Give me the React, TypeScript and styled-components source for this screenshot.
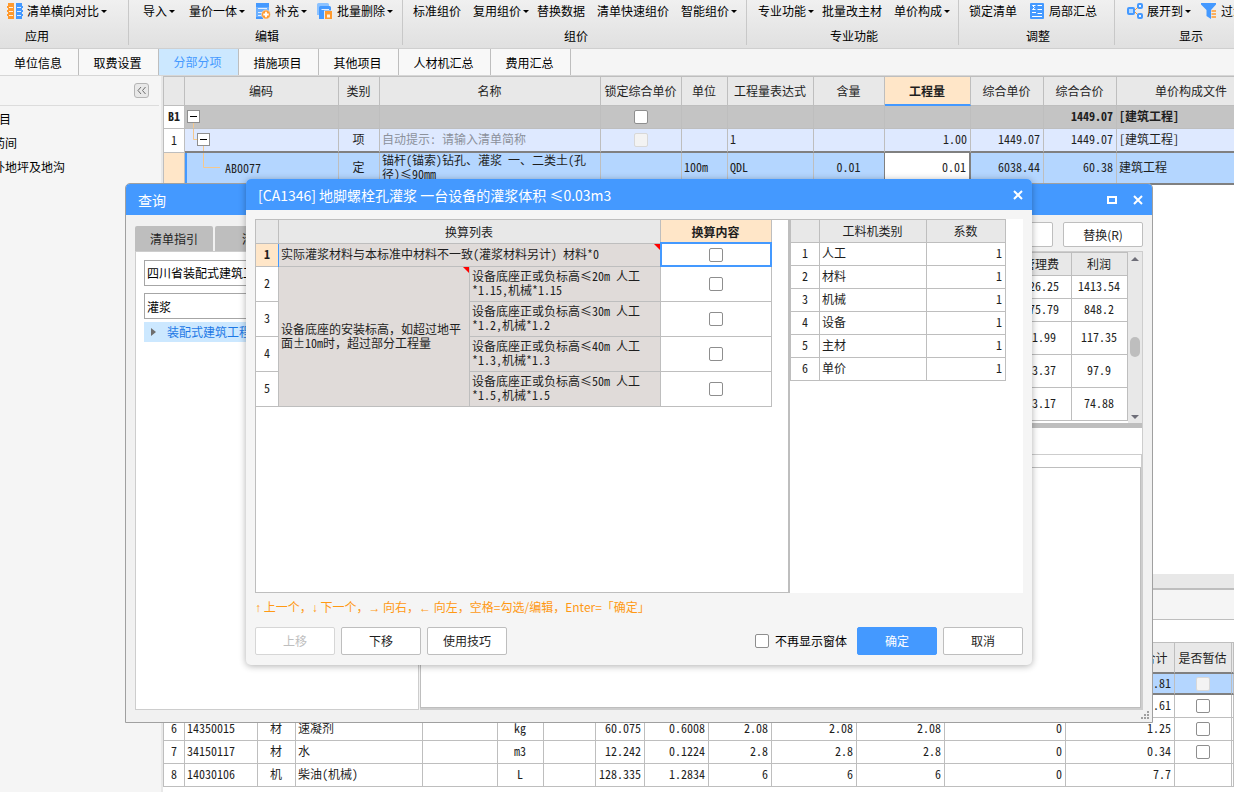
import React from 'react';
import styled, { createGlobalStyle, css } from 'styled-components';

const BLUE = '#4499ff';
const ORANGE = '#ff9a2e';
const LINE = '#bebebe';
const HEAD = '#e8e8e8';
const PEACH = '#ffe6c8';
const SELECTED = '#b4d6ff';
const DARK = '#808080';

const Global = createGlobalStyle`
  *, *::before, *::after { box-sizing: border-box; }
  body {
    margin: 0;
    overflow: hidden;
    color: #000;
    background: #f5f5f5;
    font: 12px/16px "Noto Sans CJK SC", sans-serif;
  }
  button, input, select { font: inherit; color: inherit; }
`;

const Page = styled.div`
  position: relative;
  display: flex;
  flex-direction: column;
  height: 100vh;
  overflow: hidden;
`;

/* ---------- ribbon ---------- */

const Ribbon = styled.header`
  display: flex;
  flex: none;
  height: 49px;
  overflow: hidden;
  background: linear-gradient(#f0f0f0, #e0e0e0);
  border-bottom: 1px solid #cfcfcf;
`;

const RibbonGroup = styled.section<{ $width: number }>`
  flex: none;
  width: ${(p) => p.$width}px;
  height: 45px;
  border-right: 1px solid #c8c8c8;
`;

const RibbonTools = styled.div<{ $inset: number; $gap?: number }>`
  display: flex;
  align-items: center;
  height: 22px;
  gap: ${(p) => p.$gap ?? 0}px;
  padding-left: ${(p) => p.$inset}px;
`;

const ToolButton = styled.button<{ $icon?: boolean; $drop?: boolean }>`
  display: flex;
  flex: none;
  align-items: center;
  height: 22px;
  padding: 0 ${(p) => (p.$drop ? 2 : 6)}px 0 ${(p) => (p.$icon ? 2 : 6)}px;
  border: 0;
  background: none;
  white-space: nowrap;

  svg { flex: none; margin-right: 4px; }
`;

const Caret = styled.span`
  width: 6px;
  margin-left: 2px;
  border: 3px solid transparent;
  border-top-color: #000;
  border-bottom: 0;
`;

const GroupName = styled.div<{ $start?: number }>`
  height: 22px;
  margin-top: 4px;
  line-height: 20px;
  text-align: ${(p) => (p.$start ? 'left' : 'center')};
  padding-left: ${(p) => p.$start ?? 3}px;
`;

/* ---------- tabs ---------- */

const TabBar = styled.nav`
  display: flex;
  flex: none;
  height: 27px;
  background: #f5f5f5;
  border-bottom: 1px solid #d6d6d6;
`;

const Tab = styled.button<{ $width: number; $active?: boolean }>`
  width: ${(p) => p.$width}px;
  padding: ${(p) => (p.$active ? 0 : 2)}px 2px 0 0;
  border: 0;
  border-right: 1px solid ${LINE};
  line-height: 24px;
  background: ${(p) => (p.$active ? '#cce8ff' : '#f8f8f8')};
  color: ${(p) => (p.$active ? BLUE : '#000')};
`;

/* ---------- workspace ---------- */

const Workspace = styled.div`
  display: flex;
  flex: 1;
  min-height: 0;
`;

const Sidebar = styled.aside`
  flex: none;
  width: 163px;
  overflow: hidden;
  border-right: 2px solid #e8e8e8;
`;

const SidebarHead = styled.div`
  display: flex;
  justify-content: flex-end;
  align-items: center;
  height: 30px;
  margin-right: 2px;
  padding-right: 10px;
  border-bottom: 1px solid #dcdcdc;
`;

const CollapseButton = styled.button`
  display: grid;
  place-items: center;
  width: 15px;
  height: 15px;
  padding: 0;
  border: 1px solid #b4b4b4;
  border-radius: 3px;
  background: #e8e8e8;
`;

const TreeList = styled.ul`
  margin: 0 0 0 -7px;
  padding: 1px 0 0;
  list-style: none;
  white-space: nowrap;
  line-height: 24px;
`;

const TreeRoot = styled.li`
  padding-left: 6px;
`;

const Main = styled.main`
  display: flex;
  flex: 1;
  flex-direction: column;
  min-width: 0;
  overflow: hidden;
  background: #fff;
`;

/* ---------- data grids ---------- */

const Grid = styled.table<{ $width?: string; $frame?: boolean }>`
  table-layout: fixed;
  border-collapse: separate;
  border-spacing: 0;
  width: ${(p) => p.$width ?? '100%'};
  color: #1e1e1e;
  font: 12px/14px "Noto Sans Mono CJK SC", "Noto Sans CJK SC", monospace;
  ${(p) => p.$frame && css`
    border-top: 1px solid ${LINE};
    border-left: 1px solid ${LINE};
  `}
`;

const HeadCell = styled.th<{ $active?: boolean }>`
  padding: 0 1px 0 0;
  overflow: hidden;
  white-space: nowrap;
  font-weight: ${(p) => (p.$active ? 700 : 400)};
  background: ${(p) => (p.$active ? PEACH : HEAD)};
  border-right: 1px solid ${LINE};
  border-bottom: 1px solid ${LINE};
`;

const FocusHead = styled(HeadCell)`
  border-bottom: 2px solid ${BLUE};
`;

const Row = styled.tr<{ $h: number; $tone?: 'section' | 'item' | 'selected' }>`
  height: ${(p) => p.$h}px;
  ${(p) => p.$tone === 'section' && css`background: #c4c4c4; font-weight: 700;`}
  ${(p) => p.$tone === 'item' && css`background: #dee9ff;`}
  ${(p) => p.$tone === 'selected' && css`background: ${SELECTED};`}
`;

const Cell = styled.td<{ $align?: 'left' | 'center' | 'right'; $edge?: boolean; $muted?: boolean }>`
  padding: 0 3px 2px 2px;
  white-space: nowrap;
  text-align: ${(p) => p.$align ?? 'left'};
  color: ${(p) => (p.$muted ? '#8c919b' : 'inherit')};
  border-right: 1px solid ${LINE};
  border-bottom: ${(p) => (p.$edge ? `2px solid ${DARK}` : `1px solid ${LINE}`)};
`;

const RowNumber = styled(Cell)<{ $current?: boolean }>`
  padding: 0 0 2px;
  text-align: center;
  background: ${(p) => (p.$current ? PEACH : '#fff')};
`;

const TickCell = styled(Cell)`
  padding: 0;
`;

const EditCell = styled(Cell)`
  background: #fff;
  box-shadow: -1px 0 0 ${DARK};
  border-right: 2px solid ${DARK};
`;

const TreeCell = styled(Cell)`
  padding: 0;

  svg { display: block; flex: none; }
`;

const TreeLabel = styled.div`
  display: flex;
  align-items: center;
  border-left: 2px solid ${BLUE};
`;

const Tick = styled.input.attrs({ type: 'checkbox' })`
  appearance: none;
  display: block;
  width: 14px;
  height: 14px;
  margin: 0 auto;
  border: 1px solid #8e8e8e;
  border-radius: 2px;
  background: #fff;

  &:disabled { border-color: #d8d8d8; background: #f3f3f3; }
`;

const UpperGrid = styled.div`
  flex: 1;
  min-height: 0;
  overflow: hidden;
`;

const Splitter = styled.div`
  flex: none;
  height: 16px;
  background: #e8e8e8;
  border-bottom: 2px solid ${LINE};
`;

const DetailBar = styled.div`
  flex: none;
  height: 30px;
  background: #f5f5f5;
  border-bottom: 1px solid ${LINE};
`;

const LowerGrid = styled.div`
  flex: none;
  padding: 22px 0 5px;
  overflow: hidden;
`;

const DarkHeadRow = styled.tr`
  height: 31px;

  th { border-bottom: 2px solid ${DARK}; }
`;

/* ---------- windows ---------- */

const QueryWindow = styled.section`
  position: absolute;
  inset: 183px 81px 69px 125px;
  display: flex;
  flex-direction: column;
  border: 1px solid #a0a0a0;
  border-radius: 5px 5px 0 0;
  overflow: hidden;
  background: #f1f1f1;
`;

const TitleBar = styled.div`
  display: flex;
  flex: none;
  align-items: center;
  justify-content: space-between;
  height: 31px;
  padding: 0 9px 0 12px;
  color: #fff;
  background: ${BLUE};
  font-size: 14px;
`;

const WindowTitle = styled.h2`
  margin: 0;
  font: inherit;
  white-space: pre;
`;

const Controls = styled.div`
  display: flex;
  gap: 16px;
`;

const ControlButton = styled.button`
  display: grid;
  padding: 0;
  border: 0;
  background: none;
`;

const QueryHead = styled.div`
  display: flex;
  flex: none;
  justify-content: space-between;
  height: 36px;
  padding: 0 9px;
`;

const PaneTabs = styled.div`
  display: flex;
  align-items: flex-end;
  gap: 2px;
`;

const PaneTab = styled.button`
  width: 78px;
  height: 25px;
  padding: 0;
  border: 0;
  border-radius: 2px 2px 0 0;
  background: ${LINE};
  color: #1e1e1e;
`;

const Button = styled.button<{ $primary?: boolean }>`
  width: 80px;
  height: 28px;
  padding: 0;
  border: 1px solid ${(p) => (p.$primary ? BLUE : LINE)};
  border-radius: 2px;
  background: ${(p) => (p.$primary ? BLUE : '#fff')};
  color: ${(p) => (p.$primary ? '#fff' : '#1e1e1e')};

  &:disabled { color: #bebebe; border-color: #d6d6d6; }
`;

const QueryActions = styled.div`
  display: flex;
  gap: 10px;
  padding-top: 7px;

  ${Button} { height: 25px; }
`;

const QueryBody = styled.div`
  display: flex;
  flex: 1;
  min-height: 0;
  padding: 0 9px 12px;
`;

const SearchPane = styled.div`
  display: flex;
  flex: none;
  flex-direction: column;
  width: 284px;
  padding: 8px;
  border: 1px solid #cdcdcd;
  background: #fff;
`;

const field = css`
  flex: none;
  height: 26px;
  margin: 0 0 7px;
  padding: 0 2px;
  border: 1px solid #a6a6a6;
  border-radius: 0;
  background: #fff;
`;

const BookSelect = styled.select`
  ${field}
  appearance: none;
`;

const KeywordInput = styled.input`
  ${field}
  margin-bottom: 3px;
`;

const ResultNode = styled.button`
  display: flex;
  flex: none;
  align-items: center;
  gap: 11px;
  height: 20px;
  padding: 0 7px;
  border: 0;
  background: #cce8ff;
  color: #1e78e6;
  white-space: nowrap;
`;

const ResultPane = styled.div`
  display: flex;
  flex: 1;
  flex-direction: column;
  min-width: 0;
  margin-left: 1px;
  border: solid #cdcdcd;
  border-width: 1px 1px 2px 0;
  background: #fff;
`;

const ResultTable = styled.div`
  display: flex;
  flex: none;
  justify-content: flex-end;
  align-items: flex-start;
  height: 171px;
`;

const ScrollTrack = styled.div`
  display: flex;
  flex: none;
  flex-direction: column;
  align-items: center;
  align-self: stretch;
  width: 14px;
  padding: 5px 0 4px;
  background: #e8e8e8;
`;

const ScrollThumb = styled.div`
  width: 10px;
  height: 20px;
  margin: 76px 0 auto;
  border-radius: 5px;
  background: #bebebe;
`;

const ScrollArrow = styled.span<{ $down?: boolean }>`
  border: 4px solid transparent;
  ${(p) => (p.$down
    ? css`border-top-color: #6e6e78; border-bottom: 0;`
    : css`border-bottom-color: #6e6e78; border-top: 0;`)}
`;

const ResultBar = styled.div`
  flex: none;
  height: 31px;
  border-top: 5px solid ${LINE};
`;

const ResultDetail = styled.div`
  display: flex;
  flex: 1;
  min-height: 0;
  padding-top: 12px;
  border-top: 1px solid #cdcdcd;
  border-right: 1px solid #cdcdcd;
`;

const DetailBox = styled.div`
  flex: 1;
  border: 1px solid ${LINE};
`;

const Grip = styled.svg`
  position: absolute;
  right: 3px;
  bottom: 3px;
`;

const Dialog = styled.section`
  position: absolute;
  inset: 179px 202px 127px 246px;
  display: flex;
  flex-direction: column;
  border-radius: 5px;
  overflow: hidden;
  background: #f5f5f5;
  box-shadow: 0 1px 7px rgba(0, 0, 0, 0.32);
`;

const DialogBody = styled.div`
  display: flex;
  flex: 1;
  flex-direction: column;
  min-height: 0;
  padding: 9px 9px 10px;
`;

const DialogPanels = styled.div`
  display: grid;
  flex: 1;
  grid-template-columns: 535fr 233fr;
  min-height: 0;
`;

const ConversionPanel = styled.div`
  border: 1px solid ${LINE};
  border-right-width: 2px;
  background: #fff;
`;

const FactorPanel = styled.div`
  background: #fff;
`;

const NoteCell = styled(Cell)<{ $flag?: boolean }>`
  position: relative;
  background: #e0dbd9;

  ${(p) => p.$flag && css`
    &::after {
      content: '';
      position: absolute;
      top: 0;
      right: 0;
      border-top: 6px solid #f00;
      border-left: 6px solid transparent;
    }
  `}
`;

const CurrentNote = styled(NoteCell)`
  box-shadow: -1px 0 0 ${BLUE};
`;

const CheckCell = styled(Cell)<{ $focus?: boolean }>`
  position: relative;
  padding: 0;

  ${(p) => p.$focus && css`
    &::after {
      content: '';
      position: absolute;
      inset: -2px -1px -1px -1px;
      border: 2px solid ${BLUE};
      pointer-events: none;
    }
  `}
`;

const Hint = styled.p`
  flex: none;
  margin: 0 0 5px;
  color: #ff9914;
  line-height: 28px;
  white-space: nowrap;
`;

const Key = styled.span`
  font-family: "Liberation Sans", sans-serif;
`;

const Footer = styled.div`
  display: flex;
  flex: none;
  align-items: center;
  gap: 6px;
`;

const DismissLabel = styled.label`
  display: flex;
  align-items: center;
  gap: 6px;
  margin: 0 4px 0 auto;
`;

/* ---------- icons ---------- */

const CompareIcon = () => (
  <svg width="16" height="16" viewBox="0 0 16 16">
    <path fill={ORANGE} d="M1 0h6v16H1V13H0v-2h1V9H0V7h1V5H0V3h1z" />
    <path fill={BLUE} d="M9 0h6v3h1v2h-1v2h1v2h-1v2h1v2h-1v3H9z" />
    <path stroke="#fff0dc" d="M2 4.500h4M2 8.500h4M2 12.500h4" />
    <path stroke="#dcebff" d="M10 4.500h4M10 8.500h4M10 12.500h4" />
  </svg>
);

const SupplementIcon = () => (
  <svg width="16" height="16" viewBox="0 0 16 16">
    <path fill="#6cb0ff" d="M1 1.500A1.500 1.500 0 0 1 2.500 0h10A1.500 1.500 0 0 1 14 1.500V15H1z" />
    <path fill={BLUE} d="M1 0h13v4H1zM1 14h7v2H1z" />
    <path stroke="#e4efff" d="M3 5.500h9M3 9.500h4M3 12.500h3" fill="none" />
    <circle cx="11" cy="11.500" r="4.500" fill={ORANGE} stroke="#ececec" strokeWidth=".6" />
    <path stroke="#fff" strokeWidth="1.800" d="M11 8.800v5.400M8.300 11.500h5.400" />
  </svg>
);

const BatchDeleteIcon = () => (
  <svg width="16" height="16" viewBox="0 0 16 16">
    <path fill="#8cc2ff" d="M1.500 0h9A1.500 1.500 0 0 1 12 1.500V12H0V1.500A1.500 1.500 0 0 1 1.500 0z" />
    <path fill={BLUE} d="M2 4.500A1.500 1.500 0 0 1 3.500 3h9A1.500 1.500 0 0 1 14 4.500V16H2z" />
    <path stroke="#e4efff" d="M4.500 6.500H12" />
    <path fill="#ececec" d="M7 7.500h9V16H7z" />
    <path fill={ORANGE} d="M8 8h7v2H8zM8 10h7v6H8z" />
    <path fill="#fff0dc" d="M10 11.500h3v3h-3z" />
  </svg>
);

const PartialSumIcon = () => (
  <svg width="16" height="16" viewBox="0 0 16 16">
    <rect x="1" y="0" width="14" height="16" rx="1" fill={BLUE} />
    <path fill="none" stroke="#fff" d="M6.500 2.500h-3L5.500 4.500l-2 2h3M8.500 2.500H13M8.500 6.500H13M3 9.500h4M3 13.500h10M8.500 10.500H13" />
  </svg>
);

const ExpandIcon = () => (
  <svg width="16" height="16" viewBox="0 0 16 16">
    <path fill="none" stroke={ORANGE} d="M8 7l3-3M8 9l3 3" />
    <rect x="1" y="5" width="6" height="6" rx="1" fill="#b4d8ff" stroke={BLUE} strokeWidth="2" />
    <rect x="11" y="1" width="4" height="4" rx="1" fill="#e8f2ff" stroke={BLUE} strokeWidth="2" />
    <rect x="11" y="11" width="4" height="4" rx="1" fill="#e8f2ff" stroke={BLUE} strokeWidth="2" />
  </svg>
);

const FilterIcon = () => (
  <svg width="16" height="16" viewBox="0 0 16 16">
    <path fill={BLUE} d="M0 0h15v1.500L10 7v9L5.500 13V7L0 1.500z" />
    <path stroke={ORANGE} strokeWidth="1.500" d="M10.500 8H15M10.500 11H15M10.500 14H15" />
  </svg>
);

const CloseIcon = () => (
  <svg width="10" height="10" viewBox="0 0 10 10">
    <path stroke="#fff" strokeWidth="2" d="M1 1l8 8M9 1L1 9" />
  </svg>
);

const MaximizeIcon = () => (
  <svg width="10" height="10" viewBox="0 0 10 10">
    <path fill="none" stroke="#fff" strokeWidth="2" d="M1 2h8v6H1z" />
  </svg>
);

const Fold = ({ x, y }: { x: number; y: number }) => (
  <g transform={`translate(${x} ${y})`}>
    <rect x="0.500" y="0.500" width="12" height="12" fill="#fff" stroke="#8e8e8e" />
    <path stroke="#000" d="M3 6.500h7" />
  </g>
);

/* ---------- data ---------- */

interface Tool {
  text: string;
  icon?: React.ReactNode;
  drop?: boolean;
}

interface ToolGroup {
  name: string;
  width: number;
  inset: number;
  gap?: number;
  nameStart?: number;
  tools: Tool[];
}

const groups: ToolGroup[] = [
  { name: '应用', width: 129, inset: 5, nameStart: 25, tools: [{ text: '清单横向对比', icon: <CompareIcon />, drop: true }] },
  {
    name: '编辑', width: 274, inset: 8, gap: 6,
    tools: [
      { text: '导入', drop: true },
      { text: '量价一体', drop: true },
      { text: '补充', icon: <SupplementIcon />, drop: true },
      { text: '批量删除', icon: <BatchDeleteIcon />, drop: true },
    ],
  },
  {
    name: '组价', width: 344, inset: 4,
    tools: [
      { text: '标准组价' },
      { text: '复用组价', drop: true },
      { text: '替换数据' },
      { text: '清单快速组价' },
      { text: '智能组价', drop: true },
    ],
  },
  {
    name: '专业功能', width: 212, inset: 5,
    tools: [{ text: '专业功能', drop: true }, { text: '批量改主材' }, { text: '单价构成', drop: true }],
  },
  {
    name: '调整', width: 156, inset: 4, gap: 4,
    tools: [{ text: '锁定清单' }, { text: '局部汇总', icon: <PartialSumIcon /> }],
  },
  {
    name: '显示', width: 150, inset: 10, gap: 6,
    tools: [{ text: '展开到', icon: <ExpandIcon />, drop: true }, { text: '过滤', icon: <FilterIcon />, drop: true }],
  },
];

const tabs: [string, number][] = [
  ['单位信息', 79], ['取费设置', 80], ['分部分项', 80], ['措施项目', 80],
  ['其他项目', 80], ['人材机汇总', 92], ['费用汇总', 80],
];

const upperWidths = [21, 154, 41, 221, 81, 46, 86, 71, 86, 73, 73];
const upperHeads = ['', '编码', '类别', '名称', '锁定综合单价', '单位', '工程量表达式', '含量', '工程量', '综合单价', '综合合价', '单价构成文件'];

const lowerWidths = [21, 73, 38, 127, 75, 46, 52, 49, 64, 63, 85, 88, 121, 109, 57];
const lowerRows = [
  ['6', '14350015', '材', '速凝剂', '', 'kg', '', '60.075', '0.6008', '2.08', '2.08', '2.08', '0', '1.25', 'x'],
  ['7', '34150117', '材', '水', '', 'm3', '', '12.242', '0.1224', '2.8', '2.8', '2.8', '0', '0.34', 'x'],
  ['8', '14030106', '机', '柴油(机械)', '', 'L', '', '128.335', '1.2834', '6', '6', '6', '0', '7.7', ''],
];

const heights = [
  { level: '≤20m', factor: '1.15' },
  { level: '≤30m', factor: '1.2' },
  { level: '≤40m', factor: '1.3' },
  { level: '≤50m', factor: '1.5' },
];

const feeRows: [number, string, string][] = [
  [23, '926.25', '1413.54'],
  [23, '575.79', '848.2'],
  [33, '71.99', '117.35'],
  [33, '63.37', '97.9'],
  [33, '43.17', '74.88'],
];

const factorNames = ['人工', '材料', '机械', '设备', '主材', '单价'];

const Columns = ({ widths, rest }: { widths: number[]; rest?: boolean }) => (
  <colgroup>
    {widths.map((w, i) => <col key={i} style={{ width: w }} />)}
    {rest && <col />}
  </colgroup>
);

/* ---------- parts ---------- */

const BillGrid = () => (
  <UpperGrid>
    <Grid $frame $width="max(100%, 1104px)">
      <Columns widths={upperWidths} rest />
      <thead>
        <Row $h={29}>
          {upperHeads.map((h, i) => (h === '工程量'
            ? <FocusHead key={i} $active>{h}</FocusHead>
            : <HeadCell key={i}>{h}</HeadCell>))}
        </Row>
      </thead>
      <tbody>
        <Row $h={23} $tone="section">
          <RowNumber>B1</RowNumber>
          <TreeCell>
            <svg width="40" height="22">
              <path stroke="#f5c88c" d="M8.500 17v5" />
              <Fold x={2} y={4} />
            </svg>
          </TreeCell>
          <Cell /><Cell />
          <TickCell><Tick aria-label="锁定综合单价 B1" /></TickCell>
          <Cell /><Cell /><Cell /><Cell /><Cell />
          <Cell $align="right">1449.07</Cell>
          <Cell>[建筑工程]</Cell>
        </Row>
        <Row $h={24} $tone="item">
          <RowNumber>1</RowNumber>
          <TreeCell $edge>
            <svg width="40" height="22">
              <path fill="none" stroke="#f5c88c" d="M8.500 0v10.500h4M18.500 17v5" />
              <Fold x={12} y={4} />
            </svg>
          </TreeCell>
          <Cell $edge $align="center">项</Cell>
          <Cell $edge $muted>自动提示: 请输入清单简称</Cell>
          <TickCell $edge><Tick disabled aria-label="锁定综合单价 1" /></TickCell>
          <Cell $edge />
          <Cell $edge>1</Cell>
          <Cell $edge />
          <Cell $edge $align="right">1.00</Cell>
          <Cell $edge $align="right">1449.07</Cell>
          <Cell $edge $align="right">1449.07</Cell>
          <Cell $edge>[建筑工程]</Cell>
        </Row>
        <Row $h={32} $tone="selected">
          <RowNumber $current />
          <TreeCell $edge>
            <TreeLabel>
              <svg width="38" height="30">
                <path fill="none" stroke="#f5c88c" d="M16.500 0v14.500H33" />
              </svg>
              AB0077
            </TreeLabel>
          </TreeCell>
          <Cell $edge $align="center">定</Cell>
          <Cell $edge>锚杆(锚索)钻孔、灌浆 一、二类土(孔<br />径)≤90mm</Cell>
          <Cell $edge />
          <Cell $edge>100m</Cell>
          <Cell $edge>QDL</Cell>
          <Cell $edge $align="center">0.01</Cell>
          <EditCell $edge $align="right">0.01</EditCell>
          <Cell $edge $align="right">6038.44</Cell>
          <Cell $edge $align="right">60.38</Cell>
          <Cell $edge>建筑工程</Cell>
        </Row>
      </tbody>
    </Grid>
  </UpperGrid>
);

const blanks = (n: number, edge?: boolean) =>
  Array.from({ length: n }, (_, i) => <Cell key={i} $edge={edge} />);

const lowerAlign = (i: number) => {
  if (i === 2 || i === 5) return 'center';
  return i >= 7 ? 'right' : 'left';
};

const ResourceGrid = () => (
  <LowerGrid>
    <Grid $frame>
      <Columns widths={lowerWidths} rest />
      <thead>
        <DarkHeadRow>
          {lowerWidths.slice(0, 13).map((_, i) => <HeadCell key={i} />)}
          <HeadCell>市场价暂估价合计</HeadCell>
          <HeadCell>是否暂估</HeadCell>
          <HeadCell />
        </DarkHeadRow>
      </thead>
      <tbody>
        <Row $h={21} $tone="selected">
          <RowNumber $current />
          {blanks(12, true)}
          <Cell $edge $align="right">0.81</Cell>
          <TickCell $edge><Tick disabled aria-label="是否暂估 4" /></TickCell>
          <Cell $edge />
        </Row>
        <Row $h={23}>
          <RowNumber />
          {blanks(12)}
          <Cell $align="right">0.61</Cell>
          <TickCell><Tick aria-label="是否暂估 5" /></TickCell>
          <Cell />
        </Row>
        {lowerRows.map((row) => (
          <Row key={row[0]} $h={23}>
            <RowNumber>{row[0]}</RowNumber>
            {row.slice(1, 14).map((value, i) => (
              <Cell key={i} $align={lowerAlign(i + 1)}>{value}</Cell>
            ))}
            <TickCell>{row[14] && <Tick aria-label={`是否暂估 ${row[0]}`} />}</TickCell>
            <Cell />
          </Row>
        ))}
      </tbody>
    </Grid>
  </LowerGrid>
);

const Query = () => (
  <QueryWindow aria-label="查询">
    <TitleBar>
      <WindowTitle>查询</WindowTitle>
      <Controls>
        <ControlButton aria-label="最大化"><MaximizeIcon /></ControlButton>
        <ControlButton aria-label="关闭"><CloseIcon /></ControlButton>
      </Controls>
    </TitleBar>
    <QueryHead>
      <PaneTabs>
        <PaneTab>清单指引</PaneTab>
        <PaneTab>清单</PaneTab>
      </PaneTabs>
      <QueryActions>
        <Button>插入(I)</Button>
        <Button>替换(R)</Button>
      </QueryActions>
    </QueryHead>
    <QueryBody>
      <SearchPane>
        <BookSelect aria-label="定额库">
          <option>四川省装配式建筑工程</option>
        </BookSelect>
        <KeywordInput aria-label="关键字" defaultValue="灌浆" />
        <ResultNode>
          <svg width="5" height="8"><path fill="#6e6e6e" d="M0 0l5 4-5 4z" /></svg>
          装配式建筑工程
        </ResultNode>
      </SearchPane>
      <ResultPane>
        <ResultTable>
          <Grid $frame $width="117px">
            <Columns widths={[60, 56]} />
            <thead>
              <Row $h={23}><HeadCell>管理费</HeadCell><HeadCell>利润</HeadCell></Row>
            </thead>
            <tbody>
              {feeRows.map(([h, fee, profit]) => (
                <Row key={fee} $h={h}>
                  <Cell $align="center">{fee}</Cell>
                  <Cell $align="center">{profit}</Cell>
                </Row>
              ))}
            </tbody>
          </Grid>
          <ScrollTrack>
            <ScrollArrow />
            <ScrollThumb />
            <ScrollArrow $down />
          </ScrollTrack>
        </ResultTable>
        <ResultBar />
        <ResultDetail><DetailBox /></ResultDetail>
      </ResultPane>
    </QueryBody>
    <Grip width="8" height="8">
      <path fill="#a0a0a0" d="M6 0h2v2H6zM3 3h2v2H3zM6 3h2v2H6zM0 6h2v2H0zM3 6h2v2H3zM6 6h2v2H6z" />
    </Grip>
  </QueryWindow>
);

const Conversion = () => (
  <Dialog role="dialog" aria-label="换算">
    <TitleBar>
      <WindowTitle>[CA1346] 地脚螺栓孔灌浆 一台设备的灌浆体积 ≤0.03m3</WindowTitle>
      <ControlButton aria-label="关闭"><CloseIcon /></ControlButton>
    </TitleBar>
    <DialogBody>
      <DialogPanels>
        <ConversionPanel>
          <Grid $width="516px">
            <Columns widths={[23, 191, 191, 111]} />
            <thead>
              <Row $h={24}>
                <HeadCell />
                <HeadCell colSpan={2}>换算列表</HeadCell>
                <HeadCell $active>换算内容</HeadCell>
              </Row>
            </thead>
            <tbody>
              <Row $h={23}>
                <RowNumber $current><b>1</b></RowNumber>
                <CurrentNote colSpan={2} $flag>实际灌浆材料与本标准中材料不一致(灌浆材料另计) 材料*0</CurrentNote>
                <CheckCell $focus><Tick aria-label="换算 1" /></CheckCell>
              </Row>
              {heights.map(({ level, factor }, i) => (
                <Row key={level} $h={35}>
                  <RowNumber>{i + 2}</RowNumber>
                  {i === 0 && (
                    <NoteCell rowSpan={4} $flag>
                      设备底座的安装标高，如超过地平<br />面±10m时，超过部分工程量
                    </NoteCell>
                  )}
                  <NoteCell>设备底座正或负标高{level} 人工<br />*{factor},机械*{factor}</NoteCell>
                  <CheckCell><Tick aria-label={`换算 ${i + 2}`} /></CheckCell>
                </Row>
              ))}
            </tbody>
          </Grid>
        </ConversionPanel>
        <FactorPanel>
          <Grid $frame $width="216px">
            <Columns widths={[29, 107, 79]} />
            <thead>
              <Row $h={23}><HeadCell /><HeadCell>工料机类别</HeadCell><HeadCell>系数</HeadCell></Row>
            </thead>
            <tbody>
              {factorNames.map((name, i) => (
                <Row key={name} $h={23}>
                  <RowNumber>{i + 1}</RowNumber>
                  <Cell>{name}</Cell>
                  <Cell $align="right">1</Cell>
                </Row>
              ))}
            </tbody>
          </Grid>
        </FactorPanel>
      </DialogPanels>
      <Hint>
        <Key>↑</Key> 上一个，<Key>↓</Key> 下一个，<Key>→</Key> 向右，<Key>←</Key> 向左，空格=勾选/编辑，Enter=「确定」
      </Hint>
      <Footer>
        <Button disabled>上移</Button>
        <Button>下移</Button>
        <Button>使用技巧</Button>
        <DismissLabel><Tick />不再显示窗体</DismissLabel>
        <Button $primary>确定</Button>
        <Button>取消</Button>
      </Footer>
    </DialogBody>
  </Dialog>
);

export default function App() {
  return (
    <Page>
      <Global />
      <Ribbon>
        {groups.map((g) => (
          <RibbonGroup key={g.name} $width={g.width}>
            <RibbonTools $inset={g.inset} $gap={g.gap}>
              {g.tools.map((t) => (
                <ToolButton key={t.text} $icon={!!t.icon} $drop={t.drop}>
                  {t.icon}{t.text}{t.drop && <Caret />}
                </ToolButton>
              ))}
            </RibbonTools>
            <GroupName $start={g.nameStart}>{g.name}</GroupName>
          </RibbonGroup>
        ))}
      </Ribbon>
      <TabBar>
        {tabs.map(([name, width]) => (
          <Tab key={name} $width={width} $active={name === '分部分项'}>{name}</Tab>
        ))}
      </TabBar>
      <Workspace>
        <Sidebar>
          <SidebarHead>
            <CollapseButton aria-label="收起">
              <svg width="9" height="7"><path fill="none" stroke="#6e6e6e" d="M4 0L1 3.500 4 7M8.500 0l-3 3.500 3 3.500" /></svg>
            </CollapseButton>
          </SidebarHead>
          <TreeList>
            <TreeRoot>目</TreeRoot>
            <li>药间</li>
            <li>外地坪及地沟</li>
          </TreeList>
        </Sidebar>
        <Main>
          <BillGrid />
          <Splitter />
          <DetailBar />
          <ResourceGrid />
        </Main>
      </Workspace>
      <Query />
      <Conversion />
    </Page>
  );
}
